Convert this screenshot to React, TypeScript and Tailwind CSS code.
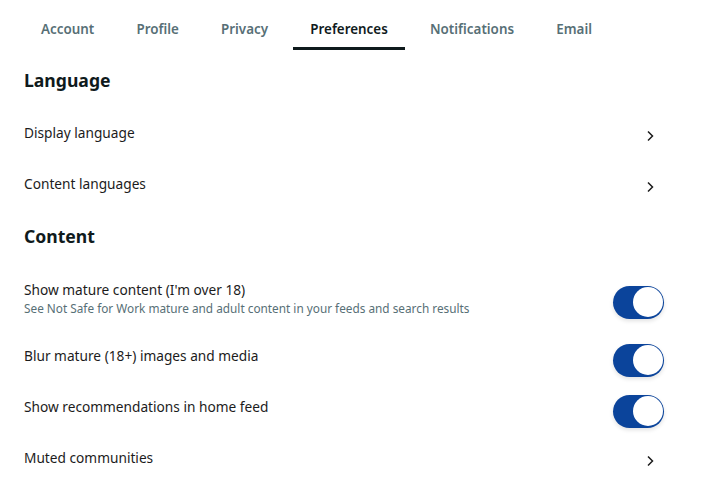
import { useState } from "react"

const tabs = ["Account", "Profile", "Privacy", "Preferences", "Notifications", "Email"]

function Chevron() {
  return (
    <svg width="10" height="12" viewBox="0 0 10 12" className="text-[#1c1c1c]">
      <path d="M3 1.5 L7.5 6 L3 10.5" fill="none" stroke="currentColor" strokeWidth="1.5" />
    </svg>
  )
}

function Toggle({ on, onClick }: { on: boolean; onClick: () => void }) {
  return (
    <button
      onClick={onClick}
      className={`mt-[3px] mr-px w-[51px] h-[33px] rounded-full p-[1.5px] flex items-center shadow-[0_2px_4px_rgba(0,0,0,0.12)] ${
        on ? "bg-[#0b449b] justify-end" : "bg-[#e5ebee] justify-start"
      }`}
    >
      <span className="block w-[30px] h-[30px] rounded-full bg-white" />
    </button>
  )
}

function LinkRow({ label }: { label: string }) {
  return (
    <div className="h-[51px] flex items-center justify-between pr-[10px]">
      <span className="text-[13.7px] text-[#1c1c1c] pb-[5px]">{label}</span>
      <Chevron />
    </div>
  )
}

export default function App() {
  const [toggles, setToggles] = useState([true, true, true])
  const flip = (i: number) => setToggles((t) => t.map((v, j) => (j === i ? !v : v)))

  return (
    <div
      className="w-[702px] h-[493px] bg-white overflow-hidden"
      style={{ fontFamily: '"Noto Sans", "Open Sans", sans-serif' }}
    >
      <div className="flex gap-[8.2px] pl-[24px] pt-[8px]">
        {tabs.map((t) => {
          const active = t === "Preferences"
          return (
            <div
              key={t}
              className={`relative h-[42px] px-[17px] flex items-center text-[13.4px] font-semibold ${
                active ? "text-[#0f1a1c]" : "text-[#576f76]"
              }`}
            >
              {t}
              {active && <div className="absolute left-0 right-0 bottom-0 h-[3px] bg-[#0f1a1c]" />}
            </div>
          )
        })}
      </div>

      <div className="pl-[24px] pr-[37px]">
        <h2 className="mt-[18px] h-[24px] leading-[24px] text-[17.6px] font-bold text-[#0f1a1c]">Language</h2>
        <div className="mt-[18px]">
          <LinkRow label="Display language" />
          <LinkRow label="Content languages" />
        </div>

        <h2 className="mt-[12px] h-[24px] leading-[24px] text-[17.6px] font-bold text-[#0f1a1c]">Content</h2>

        <div className="mt-[20px] h-[65px] flex items-center justify-between">
          <div className="flex flex-col pb-[6px]">
            <span className="text-[13.7px] text-[#1c1c1c] leading-[20px]">Show mature content (I'm over 18)</span>
            <span className="text-[11.8px] text-[#576f76] leading-[16px]">
              See Not Safe for Work mature and adult content in your feeds and search results
            </span>
          </div>
          <Toggle on={toggles[0]} onClick={() => flip(0)} />
        </div>

        <div className="h-[51px] flex items-center justify-between">
          <span className="text-[13.7px] text-[#1c1c1c] pb-[5px]">Blur mature (18+) images and media</span>
          <Toggle on={toggles[1]} onClick={() => flip(1)} />
        </div>
        <div className="h-[51px] flex items-center justify-between">
          <span className="text-[13.7px] text-[#1c1c1c] pb-[5px]">Show recommendations in home feed</span>
          <Toggle on={toggles[2]} onClick={() => flip(2)} />
        </div>
        <LinkRow label="Muted communities" />
      </div>
    </div>
  )
}
